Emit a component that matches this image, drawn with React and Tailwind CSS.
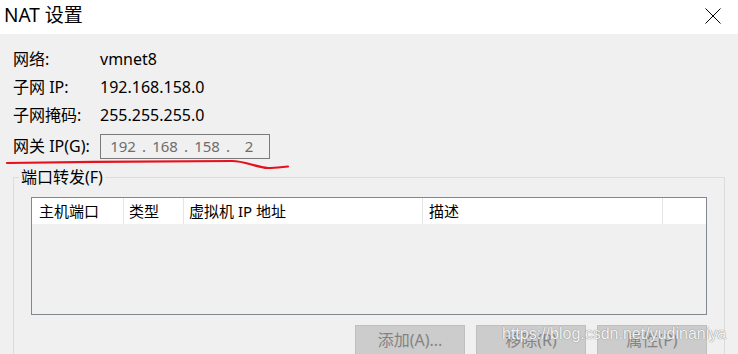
import React from "react";

const FONT = { fontFamily: '"Noto Sans", "Noto Sans CJK SC", sans-serif' };

function Row({ label, children, className = "" }) {
  return (
    <div className={"flex items-center h-[28px] " + className}>
      <div className="w-[87px] shrink-0 text-[16px] text-black">{label}</div>
      <div className="text-[16px] text-black">{children}</div>
    </div>
  );
}

export default function App() {
  const octets = ["192", "168", "158", "2"];
  return (
    <div
      className="relative w-[738px] h-[354px] overflow-hidden flex flex-col bg-[#f0f0f0]"
      style={FONT}
    >
      {/* title bar */}
      <div className="h-[34px] shrink-0 bg-white flex items-center justify-between pl-[4px] pr-[17px]">
        <span className="text-[19px] leading-none text-black -mt-[3px]">NAT 设置</span>
        <svg width="16" height="16" viewBox="0 0 16 16" className="-mt-[3px]">
          <path d="M0.5 0.5 L15.5 15.5 M15.5 0.5 L0.5 15.5" stroke="#000" strokeWidth="1" fill="none" />
        </svg>
      </div>

      {/* content */}
      <div className="flex-1 flex flex-col pl-[13px] pt-[11px]">
        <Row label="网络:">vmnet8</Row>
        <Row label="子网 IP:">192.168.158.0</Row>
        <Row label="子网掩码:">255.255.255.0</Row>
        <Row label="网关 IP(G):" className="mt-[3px]">
          <div className="w-[170px] h-[25px] border border-[#7a7a7a] bg-[#f0f0f0] flex items-center pl-[8px] text-[#6d6d6d] text-[15px]">
            {octets.map((o, i) => (
              <React.Fragment key={i}>
                <span className="w-[28px] text-center">{o}</span>
                {i < 3 && <span className="w-[14px] text-center">.</span>}
              </React.Fragment>
            ))}
          </div>
        </Row>

        {/* group box */}
        <fieldset className="mt-[7px] mr-[13px] border border-[#dcdcdc] flex-1">
          <legend className="ml-[5px] px-[2px] text-[16px] leading-[20px] text-black">端口转发(F)</legend>

          <div className="mx-[17px]">
            <div className="mt-[10px] h-[118px] border border-[#828790] flex flex-col">
              <div className="h-[26px] bg-white flex text-[15px] text-black leading-[26px]">
                <div className="w-[92px] border-r border-[#e5e5e5] pl-[7px]">主机端口</div>
                <div className="w-[60px] border-r border-[#e5e5e5] pl-[5px]">类型</div>
                <div className="w-[239px] border-r border-[#e5e5e5] pl-[5px]">虚拟机 IP 地址</div>
                <div className="w-[240px] border-r border-[#e5e5e5] pl-[6px]">描述</div>
                <div className="flex-1"></div>
              </div>
              <div className="flex-1 bg-[#f0f0f0]"></div>
            </div>

            <div className="mt-[10px] flex justify-end gap-[11px]">
              {["添加(A)...", "移除(R)", "属性(P)"].map((b) => (
                <div
                  key={b}
                  className="w-[110px] h-[30px] bg-[#cccccc] border border-[#bfbfbf] flex items-center justify-center text-[16px] text-[#838383]"
                >
                  {b}
                </div>
              ))}
            </div>
          </div>
        </fieldset>
      </div>

      {/* red annotation */}
      <svg className="absolute left-0 top-0 pointer-events-none" width="738" height="354">
        <path
          d="M7 163 C 80 162, 170 161, 232 161 C 245 161, 255 167, 268 168 C 275 168, 282 167, 288 166.5"
          stroke="#e8101c"
          strokeWidth="2.2"
          fill="none"
          strokeLinecap="round"
        />
      </svg>

      {/* watermark */}
      <div
        className="absolute left-[502px] top-[323px] text-[16px] leading-[22px] text-white/90 pointer-events-none"
        style={{ fontFamily: '"Liberation Sans", sans-serif', textShadow: "0 0 1px #8a8a8a, 0 0 1px #8a8a8a" }}
      >
        https://blog.csdn.net/yudinaniya
      </div>
    </div>
  );
}
